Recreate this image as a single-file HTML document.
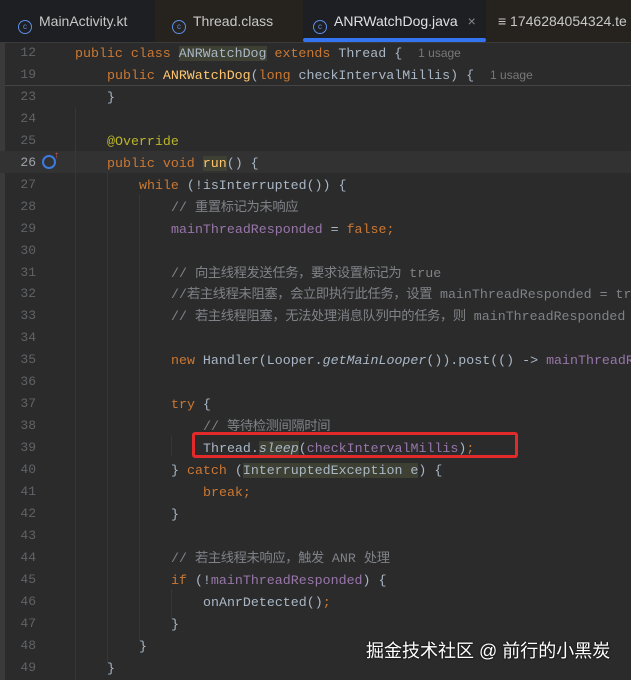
<!DOCTYPE html>
<html style="width:631px;height:680px;overflow:hidden"><head><meta charset="utf-8"><style>
body{margin:0;width:631px;height:680px;overflow:hidden;background:#2b2b2b;font-family:"Liberation Mono","Noto Sans CJK SC",monospace;position:relative}
.tabs{position:absolute;left:0;top:0;width:631px;height:42px;background:#1e1f22;border-bottom:1px solid #3a3a3a;overflow:hidden}
.tab{position:absolute;top:0;height:42px;font-family:"Liberation Sans",sans-serif;font-size:14px;color:#c8c8c8;line-height:42px;white-space:nowrap;overflow:hidden}
.ic{display:inline-block;width:12px;height:12px;border:1.5px solid #5b8ee6;border-radius:50%;vertical-align:-3px;margin-right:7px;font-size:8px;line-height:12px;text-align:center;color:#5b8ee6}
.ln{position:absolute;left:0;width:36px;text-align:right;font-size:13px;color:#606366}
.code{position:absolute;font-size:13.3px;color:#a9b7c6;white-space:pre}
.k{color:#cc7832}.f{color:#9876aa}.c{color:#7f8287}.m{color:#ffc66d}.a{color:#bbb529}.g{color:#787878;font-family:"Liberation Sans",sans-serif;font-size:12px}
.z{letter-spacing:-0.4px}
.hl{background:#3d4032}
.guide{position:absolute;width:1px;background:#373737}
#wrap{position:absolute;left:0;top:0;width:631px;height:680px;overflow:hidden}
</style></head><body><div id="wrap">
<div style="position:absolute;left:0;top:42px;width:5px;height:638px;background:#3a3a3a"></div>
<div style="position:absolute;left:0;top:151px;width:631px;height:22px;background:#323232"></div>
<div class="tabs">
<div class="tab" style="left:0;width:155px;padding-left:18px;box-sizing:border-box"><span class="ic">c</span>MainActivity.kt</div>
<div class="tab" style="left:155px;width:148px;background:#26231f;padding-left:17px;box-sizing:border-box"><span class="ic">c</span>Thread.class</div>
<div class="tab" style="left:303px;width:183px;background:#1e1f22;padding-left:10px;box-sizing:border-box;color:#dfe1e5"><span class="ic">c</span>ANRWatchDog.java <span style="color:#888;margin-left:6px">×</span></div>
<div style="position:absolute;left:303px;top:38px;width:183px;height:4px;background:#3574f0;border-radius:2px"></div>
<div class="tab" style="left:486px;width:145px;background:#26231f;padding-left:12px;box-sizing:border-box">≡ 1746284054324.te</div>
</div>
<div style="position:absolute;left:5px;top:85px;width:626px;height:1px;background:#444"></div>
<div class="guide" style="left:75px;top:108px;height:572px"></div>
<div class="guide" style="left:107px;top:173px;height:490px"></div>
<div class="guide" style="left:139px;top:195px;height:446px"></div>
<div class="guide" style="left:171px;top:436px;height:20px"></div>
<div class="guide" style="left:171px;top:589px;height:30px"></div>

<div id="L"></div>
<script>
var rows=[
[12,'75','<span class="k">public class </span><span class="hl">ANRWatchDog</span><span class="k"> extends </span>Thread {  <span class="g">1 usage</span>'],
[19,'107','<span class="k">public </span><span class="m">ANRWatchDog</span>(<span class="k">long </span>checkIntervalMillis) {  <span class="g">1 usage</span>'],
[23,'107','}'],
[24,'',''],
[25,'107','<span class="a">@Override</span>'],
[26,'107','<span class="k">public void </span><span class="m hl">run</span>() {'],
[27,'139','<span class="k">while </span>(!isInterrupted()) {'],
[28,'171','<span class="c">// <span class="z">重置标记为未响应</span></span>'],
[29,'171','<span class="f">mainThreadResponded</span> = <span class="k">false;</span>'],
[30,'',''],
[31,'171','<span class="c">// <span class="z">向主线程发送任务，要求设置标记为</span> true</span>'],
[32,'171','<span class="c">//<span class="z">若主线程未阻塞，会立即执行此任务，设置</span> mainThreadResponded = true</span>'],
[33,'171','<span class="c">// <span class="z">若主线程阻塞，无法处理消息队列中的任务，则</span> mainThreadResponded</span>'],
[34,'',''],
[35,'171','<span class="k">new </span>Handler(Looper.<i>getMainLooper</i>()).post(() -> <span class="f">mainThreadResponded</span>'],
[36,'',''],
[37,'171','<span class="k">try </span>{'],
[38,'203','<span class="c">// <span class="z">等待检测间隔时间</span></span>'],
[39,'203','Thread.<i class="hl">sleep</i>(<span class="f">checkIntervalMillis</span>)<span class="k">;</span>'],
[40,'171','} <span class="k">catch </span>(<span class="hl">InterruptedException e</span>) {'],
[41,'203','<span class="k">break;</span>'],
[42,'171','}'],
[43,'',''],
[44,'171','<span class="c">// <span class="z">若主线程未响应，触发</span> ANR <span class="z">处理</span></span>'],
[45,'171','<span class="k">if </span>(!<span class="f">mainThreadResponded</span>) {'],
[46,'203','onAnrDetected()<span class="k">;</span>'],
[47,'171','}'],
[48,'139','}'],
[49,'107','}']];
var h='';rows.forEach(function(r,i){var y=43+i*21.95;
h+='<div class="ln" style="top:'+(y+2)+'px;'+(r[0]==26?'color:#a1a3ab':'')+'">'+r[0]+'</div>';
if(r[1])h+='<div class="code" style="left:'+r[1]+'px;top:'+y+'px;line-height:21px">'+r[2]+'</div>';});
document.getElementById('L').innerHTML=h;
</script>
<div style="position:absolute;left:42px;top:155px;width:10px;height:10px;border:2px solid #3d7be0;border-radius:50%"></div>
<div style="position:absolute;left:54px;top:150px;color:#e05555;font-size:10px;font-family:'Liberation Sans',sans-serif">↑</div>
<div style="position:absolute;left:192px;top:432px;width:320px;height:20px;border:3px solid #e32a2a;border-radius:3px"></div>
<div style="position:absolute;left:366px;top:637px;font-family:'Liberation Sans','Noto Sans CJK SC',sans-serif;font-size:18px;color:#fff;text-shadow:0 0 2px #000">掘金技术社区 @ 前行的小黑炭</div>
</div></body></html>
